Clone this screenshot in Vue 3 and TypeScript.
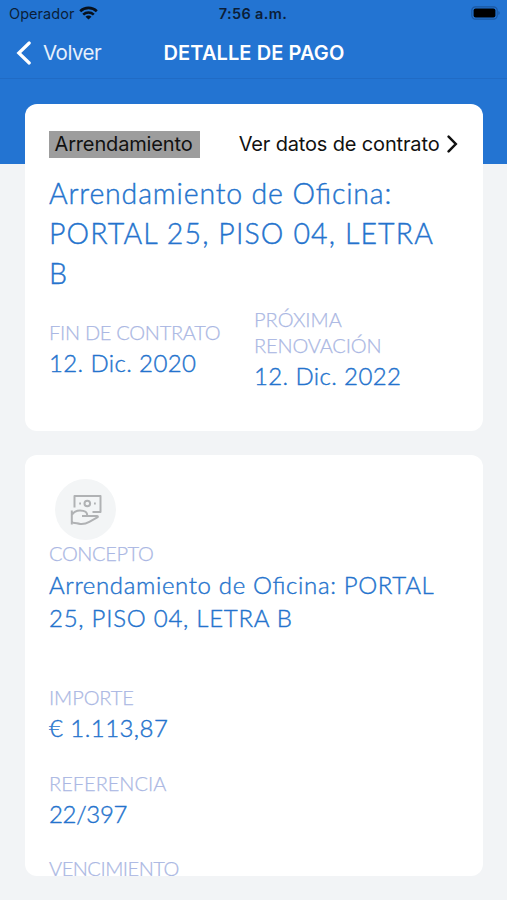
<script setup lang="ts">
interface Field {
  key: string
  label: string
  lines: string[]
}

const fields: Field[] = [
  { key: 'concepto', label: 'CONCEPTO', lines: ['Arrendamiento de Oficina: PORTAL', '25, PISO 04, LETRA B'] },
  { key: 'importe', label: 'IMPORTE', lines: ['€ 1.113,87'] },
  { key: 'referencia', label: 'REFERENCIA', lines: ['22/397'] },
  { key: 'vencimiento', label: 'VENCIMIENTO', lines: [] },
]
const title: string[] = ['Arrendamiento de Oficina:', 'PORTAL 25, PISO 04, LETRA', 'B']
</script>

<template>
  <div class="screen">
    <header class="top">
      <div class="status">
        <div class="carrier">
          <span class="operator">Operador</span>
          <svg class="wifi" viewBox="0 0 19 14" width="19" height="14">
            <path d="M1.2 5.2C5.8.7 13.2.7 17.8 5.2" />
            <path d="M4.2 8.6c3-2.8 7.6-2.8 10.6 0" />
            <path class="dot" d="M9.5 13.6 6.5 10.8c1.7-1.6 4.3-1.6 6 0z" />
          </svg>
        </div>
        <span class="time">7:56 a.m.</span>
        <svg class="battery" viewBox="0 0 30 14" width="30" height="14">
          <rect class="shell" x=".8" y=".8" width="25.4" height="12.4" rx="3.6" />
          <rect x="2.6" y="2.6" width="21.8" height="8.8" rx="2" />
          <path class="tip" d="M27.4 5v4c1.7-.6 1.7-3.4 0-4z" />
        </svg>
      </div>
      <nav class="nav">
        <div class="back">
          <svg viewBox="0 0 16 24" width="16" height="24"><path d="M13.2 2 2.8 12l10.4 10" /></svg>
          <span>Volver</span>
        </div>
        <h1>DETALLE DE PAGO</h1>
      </nav>
    </header>

    <main class="content">
      <section class="card contract">
        <div class="card-head">
          <span class="tag"><span>Arrendamiento</span></span>
          <div class="link">
            <span>Ver datos de contrato</span>
            <svg viewBox="0 0 12 20" width="12" height="20"><path d="M1.6 2.6 8.8 10l-7.2 7.4" /></svg>
          </div>
        </div>
        <h2 class="title">
          <span v-for="(line, i) in title" :key="line" :class="'t' + i">{{ line }}</span>
        </h2>
        <div class="dates">
          <div class="date">
            <div class="label fin">FIN DE CONTRATO</div>
            <div class="value day">12. Dic. 2020</div>
          </div>
          <div class="date">
            <div class="label"><span>PRÓXIMA</span><span class="renov">RENOVACIÓN</span></div>
            <div class="value day">12. Dic. 2022</div>
          </div>
        </div>
      </section>

      <section class="card detail">
        <div class="badge">
          <svg viewBox="0 0 34 34" width="34" height="34">
            <path d="M5.5 14.5V3h26v16h-8" />
            <circle cx="18.3" cy="10.5" r="2.8" />
            <path d="M10.2 10.5h1.8M25 10.5h1.8" />
            <path d="M2.8 17.500v14M2.800 22C5 18.500 8 17.600 11 17.600c4.800 0 7.300 1 7.300 5.200M13 22.900h14.800c1.300 0 1.400.9.500 1.400l-8 4.600c-2.900 1.600-5.300 2.300-9 2-3.600-.3-5-1.400-8.500-1" />
          </svg>
        </div>
        <div v-for="field in fields" :key="field.key" class="field" :class="field.key">
          <div class="label">{{ field.label }}</div>
          <div class="value">
            <span v-for="(line, i) in field.lines" :key="line" :class="'v' + i">{{ line }}</span>
          </div>
        </div>
      </section>
    </main>
  </div>
</template>

<style>
body {
  margin: 0;
  background: #f2f4f6;
}
</style>

<style scoped>
.screen {
  width: 507px;
  height: 900px;
  overflow: hidden;
  box-sizing: border-box;
  font-family: Inter, sans-serif;
  background: linear-gradient(#2374d2 0 164.5px, #f2f4f6 164.5px);
}
.top {
  height: 79px;
  box-sizing: border-box;
  border-bottom: 1px solid #206bc5;
}
.status {
  height: 27px;
  display: grid;
  grid-template-columns: 1fr auto 1fr;
  align-items: center;
  padding: 0 6px 0 9px;
  color: #0b1e38;
  font-size: 14.5px;
}
.carrier {
  display: flex;
  align-items: center;
  gap: 5px;
}
.operator {
  letter-spacing: 0.05px;
}
.wifi {
  margin-top: -2px;
}
.wifi path {
  fill: none;
  stroke: #07101c;
  stroke-width: 2.6;
}
.wifi .dot {
  fill: #07101c;
  stroke: none;
}
.time {
  font-weight: 600;
  letter-spacing: 0.35px;
  margin-left: -4px;
}
.battery {
  justify-self: end;
  margin-top: -1px;
}
.battery .shell {
  fill: none;
  stroke: #1b57a0;
  stroke-width: 1.2;
}
.battery .tip {
  fill: #1b57a0;
}
.nav {
  height: 51px;
  display: grid;
  grid-template-columns: 1fr auto 1fr;
  align-items: center;
  padding: 0 15px 0 16px;
  color: #fff;
}
.back {
  display: flex;
  align-items: center;
  gap: 11px;
  font-size: 20.5px;
  letter-spacing: -0.5px;
  color: #e6f0fc;
}
.back path {
  fill: none;
  stroke: #fff;
  stroke-width: 3.2;
  stroke-linecap: round;
}
h1 {
  margin: 0;
  font-size: 20px;
  font-weight: 600;
  letter-spacing: 0.1px;
  white-space: nowrap;
}
.content {
  padding: 24.5px 24.5px 0 25px;
}
.card {
  box-sizing: border-box;
  background: #fff;
  border-radius: 12px;
  overflow: hidden;
  padding: 0 24px;
}
.contract {
  height: 327.5px;
  padding-top: 27px;
}
.card-head {
  height: 27px;
  display: flex;
  align-items: center;
  justify-content: space-between;
  color: #111;
  font-size: 20px;
  letter-spacing: -0.15px;
  white-space: nowrap;
}
.tag {
  width: 151px;
  height: 27px;
  box-sizing: border-box;
  padding-right: 2px;
  display: flex;
  align-items: center;
  justify-content: center;
  background: #9d9d9d;
}
.link {
  display: flex;
  align-items: center;
  gap: 7px;
}
.link path {
  fill: none;
  stroke: #111;
  stroke-width: 2.5;
  stroke-linecap: round;
}
.title,
.label,
.value {
  white-space: nowrap;
}
.title {
  margin: 15px 0 0;
  display: flex;
  flex-direction: column;
  color: #2473cd;
  font: 300 28.5px/40px Lato, sans-serif;
  font-feature-settings: 'liga' 1;
  -webkit-text-stroke: 0.4px currentColor;
}
.t0 {
  letter-spacing: 0.83px;
}
.t1 {
  letter-spacing: 1.12px;
}
.dates {
  margin-top: 13px;
  display: grid;
  grid-template-columns: 205px 1fr;
  align-items: center;
}
.label {
  display: flex;
  flex-direction: column;
  color: #aab7e3;
  font: 300 20px/26.3px Lato, sans-serif;
  -webkit-text-stroke: 0.25px currentColor;
}
.value {
  margin-top: 1px;
  display: flex;
  flex-direction: column;
  color: #2473cd;
  font: 300 24px/33px Lato, sans-serif;
  font-feature-settings: 'liga' 1;
  -webkit-text-stroke: 0.4px currentColor;
}
.fin {
  letter-spacing: -0.28px;
}
.renov {
  letter-spacing: -0.15px;
}
.day {
  letter-spacing: 0.38px;
}
.detail {
  height: 420.5px;
  margin-top: 24px;
  padding-top: 24px;
}
.badge {
  width: 61px;
  height: 61px;
  margin-left: 6px;
  display: flex;
  align-items: center;
  justify-content: center;
  border-radius: 50%;
  background: #f3f5f6;
}
.badge path,
.badge circle {
  fill: none;
  stroke: #b0b2b4;
  stroke-width: 2;
  stroke-linejoin: round;
}
.concepto {
  height: 144px;
}
.concepto .label {
  letter-spacing: -0.38px;
}
.concepto .value {
  margin-top: 2px;
}
.concepto .v0 {
  letter-spacing: 0.64px;
}
.concepto .v1 {
  letter-spacing: 0.74px;
}
.importe,
.referencia {
  height: 85.5px;
}
.importe .label {
  letter-spacing: -0.1px;
}
.importe .value {
  letter-spacing: 0.45px;
}
.referencia .value {
  letter-spacing: -0.3px;
}
.vencimiento .label {
  letter-spacing: -0.48px;
}
</style>
